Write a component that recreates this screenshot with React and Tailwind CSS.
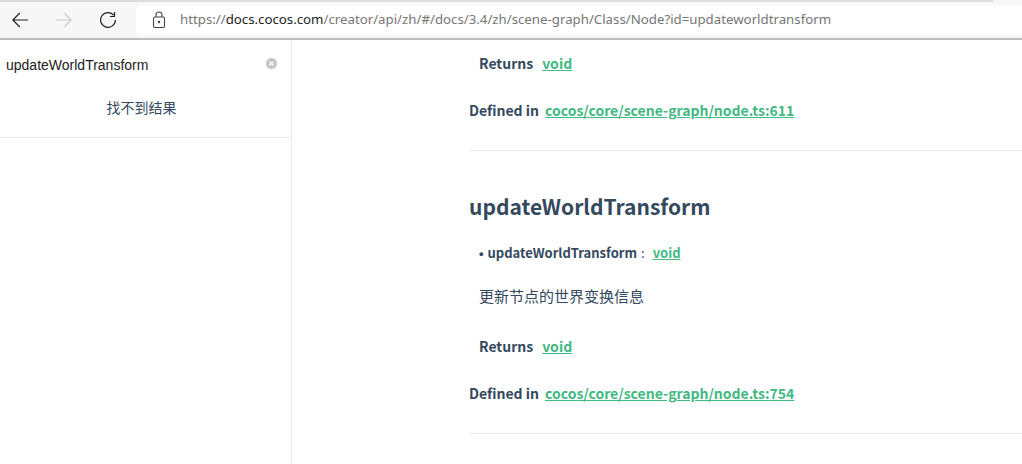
import React from 'react';

const cjk = "font-['Noto_Sans_CJK_SC',sans-serif]";

function Returns() {
  return (
    <p className="pl-2.5 text-sm leading-6 font-semibold text-[#34495e]">
      Returns<a className="ml-[9px] underline text-[#42b983]">void</a>
    </p>
  );
}

function DefinedIn({ line }) {
  return (
    <p className="text-sm leading-6 font-semibold text-[#34495e]">
      Defined in<a className="ml-1.5 underline text-[#42b983]">cocos/core/scene-graph/node.ts:{line}</a>
    </p>
  );
}

export default function App() {
  return (
    <div className={`w-[1022px] h-[464px] overflow-hidden bg-white flex flex-col ${cjk}`}>
      {/* Browser toolbar */}
      <div className="h-10 shrink-0 bg-[#f7f7f7] border-b-2 border-[#bdbdbd] flex flex-col">
        <div className="h-[2px] w-[993px] bg-[#dcdcdc]" />
        <div className="flex-1 flex items-center">
          <div className="w-[136px] shrink-0 flex items-center pl-3 gap-7">
            <svg width="16" height="16" viewBox="0 0 16 16" fill="none" stroke="#222" strokeWidth="1.2">
              <path d="M16 8H.8M7.800 1 .8 8l7 7" />
            </svg>
            <svg width="16" height="16" viewBox="0 0 16 16" fill="none" stroke="#ccc" strokeWidth="1.2">
              <path d="M0 8h15.200M8.200 1l7 7-7 7" />
            </svg>
            <svg width="16" height="16" viewBox="0 0 16 16" fill="none" stroke="#222" strokeWidth="1.200">
              <path d="M13.500 3A7.400 7.400 0 1 0 15.400 8M14.500 0v4.500H10" />
            </svg>
          </div>
          <div className="flex-1 h-[30px] bg-white rounded-l-md flex items-center pl-4 font-['Noto_Sans',sans-serif] text-[13.250px] whitespace-nowrap">
            <svg width="14" height="18" viewBox="0 0 14 18" fill="none" stroke="#444" strokeWidth="1.100" className="mr-[14px]">
              <rect x="1.500" y="6" width="11" height="10.500" rx="1.500" />
              <path d="M4 6V4a3 3 0 0 1 6 0v2" />
              <circle cx="7" cy="11" r="0.700" fill="#444" />
            </svg>
            <span className="text-[#767676]">https://</span>
            <span className="text-[#222]">docs.cocos.com</span>
            <span className="text-[#767676]">/creator/api/zh/#/docs/3.4/zh/scene-graph/Class/Node?id=updateworldtransform</span>
          </div>
        </div>
      </div>

      <div className="flex-1 flex min-h-0">
        {/* Search sidebar */}
        <aside className="w-[292px] shrink-0 border-r border-[#eaeaea]">
          <div className="h-[98px] border-b border-[#eaeaea] relative">
            <div className="pt-[15px] pl-1.5 font-['Liberation_Sans',sans-serif] text-sm leading-5 text-[#222]">updateWorldTransform</div>
            <span className="absolute left-[266px] top-[18px] w-[11px] h-[11px] rounded-full bg-[#c4c4c4] flex items-center justify-center">
              <svg width="5" height="5" viewBox="0 0 5 5" stroke="#fff" strokeWidth="1.200"><path d="M.5.500l4 4M4.500.500l-4 4" /></svg>
            </span>
            <p className="pt-[22px] pr-2 text-center text-sm leading-5 text-[#34495e] font-normal">找不到结果</p>
          </div>
        </aside>

        {/* Docs content */}
        <main className="flex-1 pl-[177px] pt-[11px] min-w-0">
          <Returns />
          <div className="mt-[23px]"><DefinedIn line="611" /></div>
          <hr className="mt-7 border-t border-[#eaeaea]" />
          <h2 className="mt-[37px] text-[21px] leading-[36px] font-semibold text-[#34495e]">updateWorldTransform</h2>
          <p className="mt-[17px] pl-2.5 text-[13px] leading-6 font-semibold text-[#34495e]">
            <span className="font-['Liberation_Sans',sans-serif] mr-1">•</span>updateWorldTransform<span className="font-normal ml-1">:</span><a className="ml-2 underline text-[#42b983]">void</a>
          </p>
          <p className="mt-[18px] pl-2.5 text-[15px] leading-6 text-[#34495e]">更新节点的世界变换信息</p>
          <div className="mt-[26px]"><Returns /></div>
          <div className="mt-[23px]"><DefinedIn line="754" /></div>
          <hr className="mt-7 border-t border-[#eaeaea]" />
        </main>
      </div>
    </div>
  );
}
